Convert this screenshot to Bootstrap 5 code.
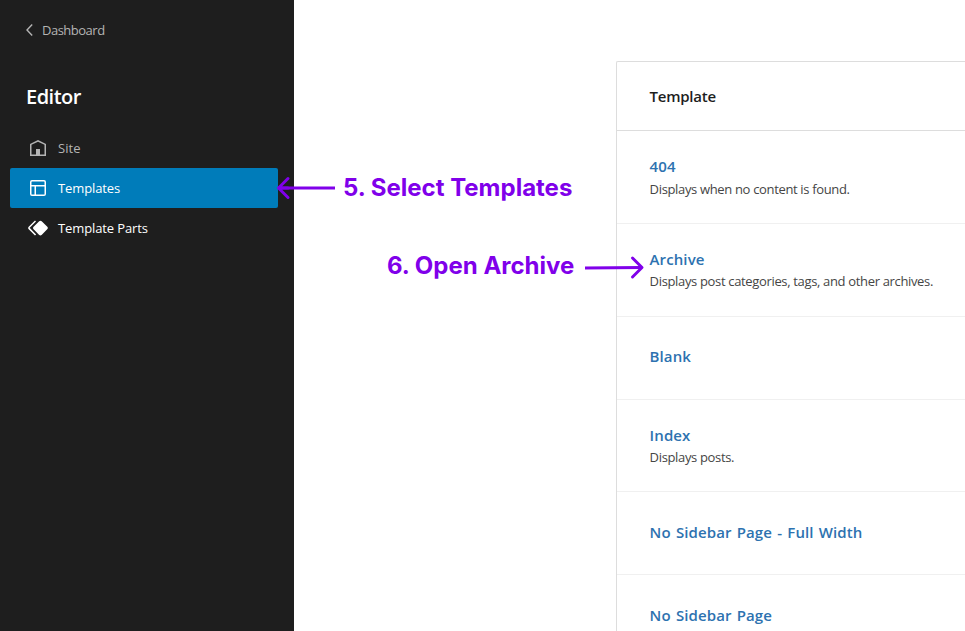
<!DOCTYPE html>
<html lang="en">
<head>
<meta charset="utf-8">
<meta name="viewport" content="width=device-width, initial-scale=1">
<title>Editor – Templates</title>
<link href="https://cdn.jsdelivr.net/npm/bootstrap@5.3.0/dist/css/bootstrap.min.css" rel="stylesheet">
<style>
body { font-family: "Segoe UI", "Open Sans", sans-serif; font-size: 13px; line-height: 20px; color: #1e1e1e; }
.sidebar { width: 294px; background: #1e1e1e; padding: 20px 16px 0 10px; }
.back-link { color: #b4b4b4; padding-left: 14px; letter-spacing: -.5px; }
.editor-title { font-size: 20px; line-height: 24px; font-weight: 600; letter-spacing: -.5px; margin: 45px 0 19px 16px; }
.side-item { height: 40px; padding: 0 16px; gap: 8px; color: #fff; border-radius: 2px; letter-spacing: -.12px; }
.side-item.dim { color: #b4b4b4; letter-spacing: .1px; }
.side-item.current { background: #007cba; }
svg { display: block; fill: currentColor; flex: none; }
.tpl-panel { margin: 61px 0 0 322px; border: 1px solid #ddd; border-width: 1px 0 0 1px; border-top-left-radius: 2px; }
.tpl-head, .tpl-row { padding-left: 32.6px; border-bottom: 1px solid #f0f0f0; }
.tpl-head { height: 69px; border-color: #ddd; font-size: 15px; font-weight: 600; letter-spacing: -.25px; }
.tpl-row { height: 93px; }
.tpl-row.short { height: 83px; padding-bottom: 2px; }
.tpl-row.blank { padding-bottom: 4px; }
.tpl-row.mid { height: 92px; }
.tpl-name { color: #2d72b0; font-size: 15px; font-weight: 600; line-height: 22px; text-decoration: none; letter-spacing: .1px; word-spacing: 1.2px; }
.tpl-desc { color: #454545; line-height: 22px; letter-spacing: -.34px; }
.tpl-row.first .tpl-desc { padding-top: 1px; margin-bottom: -1px; }
.callout { color: #8000ea; font-family: Inter, sans-serif; font-size: 24px; font-weight: 700; line-height: 30px; letter-spacing: 0; }
.callout svg { fill: none; stroke: currentColor; stroke-width: 3; stroke-linecap: round; stroke-linejoin: round; }
.callout-templates { left: 275px; top: 173px; gap: 8px; }
.callout-archive { left: 387px; top: 251px; }
.callout-archive span { width: 198px; }
</style>
<script src="https://cdn.jsdelivr.net/npm/bootstrap@5.3.0/dist/js/bootstrap.bundle.min.js"></script>
</head>
<body class="vh-100 overflow-hidden position-relative">
<div class="d-flex h-100">
  <nav class="sidebar flex-shrink-0">
    <a href="#" class="back-link d-flex align-items-center text-decoration-none">
      <svg width="18" height="20" viewBox="0 0 18 20"><path d="M8.2 4.5L3 10l5.2 5.5" fill="none" stroke="currentColor" stroke-width="1.4"/></svg>
      <span>Dashboard</span>
    </a>
    <h1 class="editor-title text-white">Editor</h1>
    <a href="#" class="side-item dim d-flex align-items-center text-decoration-none">
      <svg width="24" height="24" viewBox="0 0 24 24"><path d="M12 4L4 7.9V20h16V7.9L12 4zm6.5 14.5H14V13h-4v5.5H5.5V8.8L12 5.7l6.5 3.1v9.7z"/></svg>
      <span>Site</span>
    </a>
    <a href="#" class="side-item current d-flex align-items-center text-decoration-none">
      <svg width="24" height="24" viewBox="0 0 24 24"><path d="M18 5.5H6a.5.5 0 00-.5.5v3h13V6a.5.5 0 00-.5-.5zm.5 5H10v8h8a.5.5 0 00.5-.5v-7.5zm-10 0h-3V18a.5.5 0 00.5.5h2.5v-8zM6 4h12a2 2 0 012 2v12a2 2 0 01-2 2H6a2 2 0 01-2-2V6a2 2 0 012-2z"/></svg>
      <span>Templates</span>
    </a>
    <a href="#" class="side-item d-flex align-items-center text-decoration-none">
      <svg width="24" height="24" viewBox="0 0 24 24"><path d="M21.3 10.8l-5.6-5.6c-.7-.7-1.8-.7-2.5 0l-5.6 5.6c-.7.7-.7 1.8 0 2.5l5.6 5.6c.3.3.8.5 1.2.5s.9-.2 1.2-.5l5.6-5.6c.8-.7.8-1.9.1-2.5zm-17.6 1L10 5.5l-1-1-6.3 6.3c-.7.7-.7 1.8 0 2.5L9 19.5l1.1-1.1-6.3-6.3c-.2 0-.2-.2-.1-.3z"/></svg>
      <span>Template Parts</span>
    </a>
  </nav>
  <main class="flex-grow-1 bg-white">
    <div class="tpl-panel">
      <div class="tpl-head d-flex align-items-center">Template</div>
      <div class="tpl-row first d-flex flex-column justify-content-center"><a href="#" class="tpl-name">404</a><span class="tpl-desc">Displays when no content is found.</span></div>
      <div class="tpl-row d-flex flex-column justify-content-center"><a href="#" class="tpl-name">Archive</a><span class="tpl-desc">Displays post categories, tags, and other archives.</span></div>
      <div class="tpl-row short blank d-flex flex-column justify-content-center"><a href="#" class="tpl-name">Blank</a></div>
      <div class="tpl-row mid d-flex flex-column justify-content-center"><a href="#" class="tpl-name">Index</a><span class="tpl-desc">Displays posts.</span></div>
      <div class="tpl-row short d-flex flex-column justify-content-center"><a href="#" class="tpl-name">No Sidebar Page - Full Width</a></div>
      <div class="tpl-row short d-flex flex-column justify-content-center"><a href="#" class="tpl-name">No Sidebar Page</a></div>
    </div>
  </main>
</div>
<div class="callout callout-templates position-absolute d-flex align-items-center text-nowrap">
  <svg width="60" height="30" viewBox="0 0 60 30"><path d="M13 5.5L3.5 15l9.5 9.5M3.5 15H13"/><path d="M4 15H60" stroke-linecap="butt"/></svg>
  <span>5. Select Templates</span>
</div>
<div class="callout callout-archive position-absolute d-flex align-items-center text-nowrap">
  <span>6. Open Archive</span>
  <svg width="60" height="30" viewBox="0 0 60 30"><path d="M47.5 7l9.5 9.5-9.5 9.5"/><path d="M0 17l57-.5" stroke-linecap="butt"/></svg>
</div>
</body>
</html>
